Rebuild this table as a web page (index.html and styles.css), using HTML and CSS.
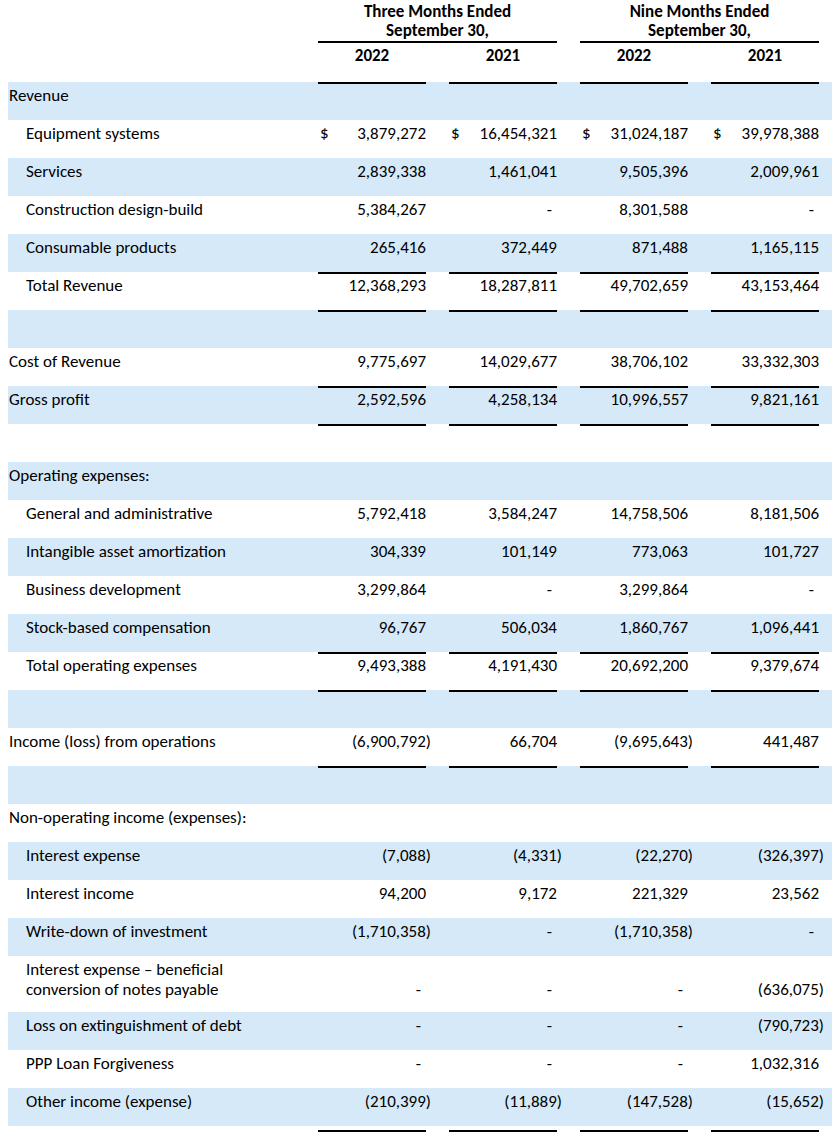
FILE: index.html
```html
<!DOCTYPE html>
<html lang="en">
<head>
<meta charset="utf-8">
<title>Statement of Operations</title>
<link rel="stylesheet" href="styles.css">
</head>
<body>
<div class="sheet">
  <div class="row hdr1">
    <div></div>
    <div class="period"><div>Three Months Ended</div><div>September 30,</div></div>
    <div class="period"><div>Nine Months Ended</div><div>September 30,</div></div>
  </div>
  <div class="row hdr2">
    <div></div>
    <div class="yr">2022</div><div class="yr">2021</div><div class="yr">2022</div><div class="yr">2021</div>
  </div>

  <div class="row band ruled"><div class="lbl">Revenue</div><div class="v"></div><div class="v"></div><div class="v"></div><div class="v"></div></div>
  <div class="row"><div class="lbl ind">Equipment systems</div>
    <div class="v usd"><span>$</span><span>3,879,272</span></div>
    <div class="v usd"><span>$</span><span>16,454,321</span></div>
    <div class="v usd"><span>$</span><span>31,024,187</span></div>
    <div class="v usd"><span>$</span><span>39,978,388</span></div></div>
  <div class="row band"><div class="lbl ind">Services</div><div class="v">2,839,338</div><div class="v">1,461,041</div><div class="v">9,505,396</div><div class="v">2,009,961</div></div>
  <div class="row"><div class="lbl ind">Construction design-build</div><div class="v">5,384,267</div><div class="v"><span class="dash">-</span></div><div class="v">8,301,588</div><div class="v"><span class="dash">-</span></div></div>
  <div class="row band"><div class="lbl ind">Consumable products</div><div class="v">265,416</div><div class="v">372,449</div><div class="v">871,488</div><div class="v">1,165,115</div></div>
  <div class="row ruled"><div class="lbl ind">Total Revenue</div><div class="v">12,368,293</div><div class="v">18,287,811</div><div class="v">49,702,659</div><div class="v">43,153,464</div></div>
  <div class="row band ruled"><div class="lbl"></div><div class="v"></div><div class="v"></div><div class="v"></div><div class="v"></div></div>
  <div class="row"><div class="lbl">Cost of Revenue</div><div class="v">9,775,697</div><div class="v">14,029,677</div><div class="v">38,706,102</div><div class="v">33,332,303</div></div>
  <div class="row band ruled"><div class="lbl">Gross profit</div><div class="v">2,592,596</div><div class="v">4,258,134</div><div class="v">10,996,557</div><div class="v">9,821,161</div></div>
  <div class="row ruled"><div class="lbl"></div><div class="v"></div><div class="v"></div><div class="v"></div><div class="v"></div></div>

  <div class="row band"><div class="lbl">Operating expenses:</div><div class="v"></div><div class="v"></div><div class="v"></div><div class="v"></div></div>
  <div class="row"><div class="lbl ind">General and administrative</div><div class="v">5,792,418</div><div class="v">3,584,247</div><div class="v">14,758,506</div><div class="v">8,181,506</div></div>
  <div class="row band"><div class="lbl ind">Intangible asset amortization</div><div class="v">304,339</div><div class="v">101,149</div><div class="v">773,063</div><div class="v">101,727</div></div>
  <div class="row"><div class="lbl ind">Business development</div><div class="v">3,299,864</div><div class="v"><span class="dash">-</span></div><div class="v">3,299,864</div><div class="v"><span class="dash">-</span></div></div>
  <div class="row band"><div class="lbl ind">Stock-based compensation</div><div class="v">96,767</div><div class="v">506,034</div><div class="v">1,860,767</div><div class="v">1,096,441</div></div>
  <div class="row ruled"><div class="lbl ind">Total operating expenses</div><div class="v">9,493,388</div><div class="v">4,191,430</div><div class="v">20,692,200</div><div class="v">9,379,674</div></div>
  <div class="row band ruled"><div class="lbl"></div><div class="v"></div><div class="v"></div><div class="v"></div><div class="v"></div></div>
  <div class="row"><div class="lbl">Income (loss) from operations</div><div class="v"><span class="neg">(6,900,792)</span></div><div class="v">66,704</div><div class="v"><span class="neg">(9,695,643)</span></div><div class="v">441,487</div></div>
  <div class="row band ruled"><div class="lbl"></div><div class="v"></div><div class="v"></div><div class="v"></div><div class="v"></div></div>

  <div class="row"><div class="lbl">Non-operating income (expenses):</div><div class="v"></div><div class="v"></div><div class="v"></div><div class="v"></div></div>
  <div class="row band"><div class="lbl ind">Interest expense</div><div class="v"><span class="neg">(7,088)</span></div><div class="v"><span class="neg">(4,331)</span></div><div class="v"><span class="neg">(22,270)</span></div><div class="v"><span class="neg">(326,397)</span></div></div>
  <div class="row"><div class="lbl ind">Interest income</div><div class="v">94,200</div><div class="v">9,172</div><div class="v">221,329</div><div class="v">23,562</div></div>
  <div class="row band"><div class="lbl ind">Write-down of investment</div><div class="v"><span class="neg">(1,710,358)</span></div><div class="v"><span class="dash">-</span></div><div class="v"><span class="neg">(1,710,358)</span></div><div class="v"><span class="dash">-</span></div></div>
  <div class="row tall"><div class="lbl ind">Interest expense – beneficial<br>conversion of notes payable</div><div class="v"><span class="dash">-</span></div><div class="v"><span class="dash">-</span></div><div class="v"><span class="dash">-</span></div><div class="v"><span class="neg">(636,075)</span></div></div>
  <div class="row band"><div class="lbl ind">Loss on extinguishment of debt</div><div class="v"><span class="dash">-</span></div><div class="v"><span class="dash">-</span></div><div class="v"><span class="dash">-</span></div><div class="v"><span class="neg">(790,723)</span></div></div>
  <div class="row"><div class="lbl ind">PPP Loan Forgiveness</div><div class="v"><span class="dash">-</span></div><div class="v"><span class="dash">-</span></div><div class="v"><span class="dash">-</span></div><div class="v">1,032,316</div></div>
  <div class="row band"><div class="lbl ind">Other income (expense)</div><div class="v"><span class="neg">(210,399)</span></div><div class="v"><span class="neg">(11,889)</span></div><div class="v"><span class="neg">(147,528)</span></div><div class="v"><span class="neg">(15,652)</span></div></div>
  <div class="row foot ruled"><div class="lbl"></div><div class="v"></div><div class="v"></div><div class="v"></div><div class="v"></div></div>
</div>
</body>
</html>
```

FILE: styles.css
```css
html, body {
  margin: 0;
  padding: 0;
  background: #ffffff;
}

.sheet {
  width: 832px;
  font-family: Carlito, Calibri, "Liberation Sans Narrow", "Liberation Sans", sans-serif;
  font-size: 17px;
  color: #000;
}

.row {
  display: grid;
  grid-template-columns: 287px repeat(4, 108px);
  column-gap: 23px;
  margin-left: 8px;
  height: 38px;
  align-items: start;
}

.row > div {
  padding-top: 4px;
  line-height: 20px;
  white-space: nowrap;
}

.band {
  background: #d5e9f8;
}

.hdr1 {
  grid-template-columns: 287px 239px 239px;
  height: 46px;
}

.row.hdr1 > div {
  padding-top: 2px;
  line-height: 19px;
}

.period {
  font-weight: bold;
  text-align: center;
  border-bottom: 2px solid #000;
  padding-bottom: 1px;
}

.hdr2 {
  height: 36px;
}

.row.hdr2 > div {
  padding-top: 0;
}

.yr {
  font-weight: bold;
  text-align: center;
}

.lbl {
  padding-left: 1px;
}

.lbl.ind {
  padding-left: 18px;
}

.v {
  text-align: right;
  height: 100%;
  box-sizing: border-box;
}

.ruled .v {
  box-shadow: inset 0 2px 0 #000;
}

.usd {
  display: flex;
  justify-content: space-between;
}

.usd span:first-child {
  padding-left: 2px;
}

.neg {
  margin-right: -5px;
}

.dash {
  padding-right: 5px;
}

.tall {
  height: 56px;
}

.row.tall .v {
  padding-top: 24px;
}

.foot {
  height: 12px;
  margin-top: 4px;
}
```
